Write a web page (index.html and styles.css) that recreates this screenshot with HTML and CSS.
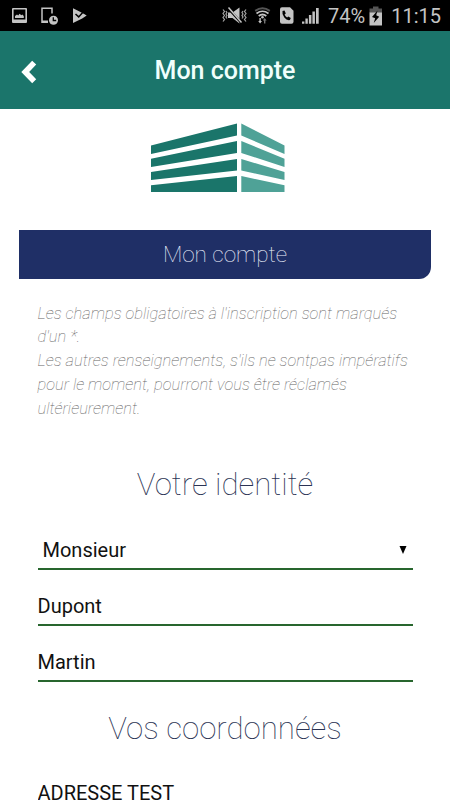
FILE: index.html
```html
<!DOCTYPE html>
<html lang="fr">
	<head>
		<meta charset="utf-8">
		<title>Mon compte</title>
		<link rel="stylesheet" href="styles.css">
	</head>
	<body>
		<div class="status">
			<div class="status-left">
				<svg width="76" height="20" viewBox="11 6 76 20">
					<path fill="#c4c4c4" fill-rule="evenodd" d="M13 8h13a1 1 0 0 1 1 1v13a1 1 0 0 1-1 1H13a1 1 0 0 1-1-1V9a1 1 0 0 1 1-1zM13.600 9.600v9.900h11.800V9.600zM15 18v-2l2-1.600 1.200 1 1.400-1.600 1.700 1.400 1-.6 1.500 1.300V18z"/>
					<path fill="none" stroke="#c4c4c4" stroke-width="1.500" d="M52 13.500V8.200H42v14h6"/>
					<path fill="#c4c4c4" d="M42 20.500h6v2h-6z"/>
					<circle cx="53.500" cy="20.200" r="4.500" fill="#c4c4c4"/>
					<path fill="none" stroke="#000" stroke-width="1.300" d="M53.300 17.300v3.200h2.900"/>
					<path fill="#c4c4c4" d="M73 8.300l6.500 3.300 4.200 2.100 3 1.700-4.500 3L73 23z"/>
					<path fill="none" stroke="#000" stroke-width="1.500" d="M75.500 14l3.200 2.900 5.300-5.800"/>
				</svg>
			</div>
			<div class="status-right">
				<svg class="status-icons" width="98" height="20" viewBox="223 6 98 20">
					<path fill="#c4c4c4" d="M229 12.500h4.500l7-5v16l-7-5.500H229z"/>
					<path fill="none" stroke="#000" stroke-width="2.600" d="M229 8l14 15.500"/>
					<path fill="none" stroke="#c4c4c4" stroke-width="1.500" d="M229.500 7.500l13 15"/>
					<path fill="none" stroke="#a4a4a4" stroke-width="1.200" d="M224 9.500l1.500 2-1.500 2 1.500 2-1.500 2 1.500 2-1.500 2M226.900 11l1 1.500-1 1.500 1 1.500-1 1.500 1 1.500M247 9.500l-1.500 2 1.500 2-1.500 2 1.500 2-1.500 2 1.500 2M244 11l-1 1.500 1 1.500-1 1.500 1 1.500-1 1.500"/>
					<path fill="none" stroke="#555" stroke-width="2" d="M256.200 10.800q7.300-5 14.600 0"/>
					<path fill="none" stroke="#c4c4c4" stroke-width="1.700" d="M257.500 13.500q6-4.500 12 0M259.700 16q3.800-3 7.600 0"/>
					<circle cx="263.500" cy="17.300" r="1.300" fill="#c4c4c4"/>
					<path fill="#c4c4c4" d="M260.400 18h1.400v3h1.200l-1.900 2.600-1.900-2.600h1.200z"/>
					<path fill="#777" d="M266.400 23.600H265v-3h-1.200l1.900-2.600 1.900 2.600h-1.200z"/>
					<path fill="#c4c4c4" d="M283 7.200h8l3.500 3.500v11a2 2 0 0 1-2 2H283a2 2 0 0 1-2-2V9.200a2 2 0 0 1 2-2z"/>
					<path fill="#000" d="M283.500 11l2-.6 1.300 3-1.200 1.200q.8 2 2.500 2.900l1.200-1.100 2.500 1.600-.9 2q-3 .7-5.600-2.500-2.600-3.400-1.800-6.500z"/>
					<path fill="#c4c4c4" d="M303 21.500h2.400v2.300H303zM306.400 18.500h2.400v5.300h-2.400zM309.900 15h2.500v8.800h-2.500zM313.400 11.500h2.500v12.300h-2.500zM317 8h2.700v15.800H317z"/>
				</svg>
				<span class="percent">74%</span>
				<svg class="battery" width="14" height="20" viewBox="370 5 14 20">
					<path fill="#555" d="M374 5.500h5.500v2h3.500V12h-12.500V7.500h3.500z"/>
					<path fill="#c4c4c4" d="M370.500 11.500H383V24.500h-12.500z"/>
					<path fill="#000" d="M378.500 9.500l-5.500 6.500 3.200 1.300-1.500 4.700 5.500-6.300-3-1.400z"/>
				</svg>
				<span class="clock">11:15</span>
			</div>
		</div>
		<div class="header">
			<a class="back" href="#">
				<svg width="16" height="24" viewBox="0 0 16 24">
					<path fill="none" stroke="#fff" stroke-width="5.600" d="M13.200 2.600L4.200 12l9 9.300"/>
				</svg>
			</a>
			<h1 class="header-title">Mon compte</h1>
		</div>
		<div class="content">
			<svg class="logo" width="134" height="69" viewBox="0 0 134 69">
				<path fill="#1a756a" d="M0 22.500L86 .5V12.500L0 31zM0 35.700L86 18V30L0 44zM0 49L86 36V47.500L0 57zM0 62.300L86 53V69H0z"/>
				<path fill="#4fa297" d="M90.300.5L133.500 22.500V31L90.300 12.500zM90.300 18L133.500 35.700V44L90.300 30zM90.300 36L133.500 49V57L90.300 47.500zM90.300 53L133.500 62.300V69H90.300z"/>
			</svg>
			<h2 class="banner">Mon compte</h2>
			<div class="form">
				<p class="note">Les champs obligatoires à l'inscription sont marqués<br>d'un *.<br>Les autres renseignements, s'ils ne sontpas impératifs<br>pour le moment, pourront vous être réclamés<br>ultérieurement.</p>
				<h3 class="section">Votre identité</h3>
				<div class="field field-select">
					<span>Monsieur</span>
					<svg width="8" height="8" viewBox="0 0 8 8"><path d="M.5 0h7L4 8z"/></svg>
				</div>
				<input class="field" type="text" value="Dupont">
				<input class="field" type="text" value="Martin">
				<h3 class="section section-contact">Vos coordonnées</h3>
				<input class="field" type="text" value="ADRESSE TEST">
			</div>
		</div>
	</body>
</html>
```
FILE: styles.css
```css
* {
	margin: 0;
	padding: 0;
	box-sizing: border-box;
}
body {
	height: 800px;
	overflow: hidden;
	background-color: #fff;
	font-family: Roboto, "Liberation Sans", sans-serif;
}
.status {
	height: 31px;
	padding: 0 9px 0 11px;
	display: flex;
	justify-content: space-between;
	align-items: center;
	background-color: #000;
	color: #c4c4c4;
	font-size: 20px;
}
.status-left, .status-right {
	display: flex;
	align-items: center;
}
.status-icons {
	margin-right: 8px;
}
.percent {
	width: 37px;
	margin-right: 4px;
}
.battery {
	margin-right: 8px;
}
.clock {
	width: 50px;
	text-align: right;
	white-space: nowrap;
}
.header {
	height: 77.500px;
	display: grid;
	grid-template-columns: 60px 1fr 60px;
	align-items: center;
	background-color: #1b756b;
}
.back {
	height: 24px;
	margin-top: 5px;
	padding-left: 21px;
}
.header-title {
	padding-top: 2px;
	text-align: center;
	color: #f0fffc;
	font-size: 25px;
	font-weight: 500;
}
.content {
	padding: 14.500px 19px 0;
}
.logo {
	display: block;
	margin: 0 auto 38px 132px;
}
.banner {
	height: 48.500px;
	border-radius: 0 0 12px 0;
	background-color: #1f2f66;
	color: #f0f4ff;
	font-size: 22.500px;
	font-weight: 100;
	line-height: 49px;
	text-align: center;
}
.form {
	padding: 23px 18.500px 0;
}
.note {
	height: 119px;
	color: #666;
	font-size: 16.420px;
	font-style: italic;
	font-weight: 100;
	line-height: 23.800px;
	white-space: nowrap;
}
.section {
	height: 93px;
	padding-top: 44px;
	color: #2b3354;
	font-size: 31.200px;
	font-weight: 100;
	line-height: 40px;
	text-align: center;
}
.section-contact {
	height: 75px;
	padding-top: 27px;
}
.field {
	display: block;
	width: 375px;
	height: 56.200px;
	padding-top: 18px;
	border: 0;
	border-bottom: 2px solid #28662e;
	background: none;
	color: #111;
	font-family: inherit;
	font-size: 20px;
	outline: none;
}
.field-select {
	display: flex;
	justify-content: space-between;
	align-items: center;
	padding-left: 5px;
	padding-right: 6px;
}
```
